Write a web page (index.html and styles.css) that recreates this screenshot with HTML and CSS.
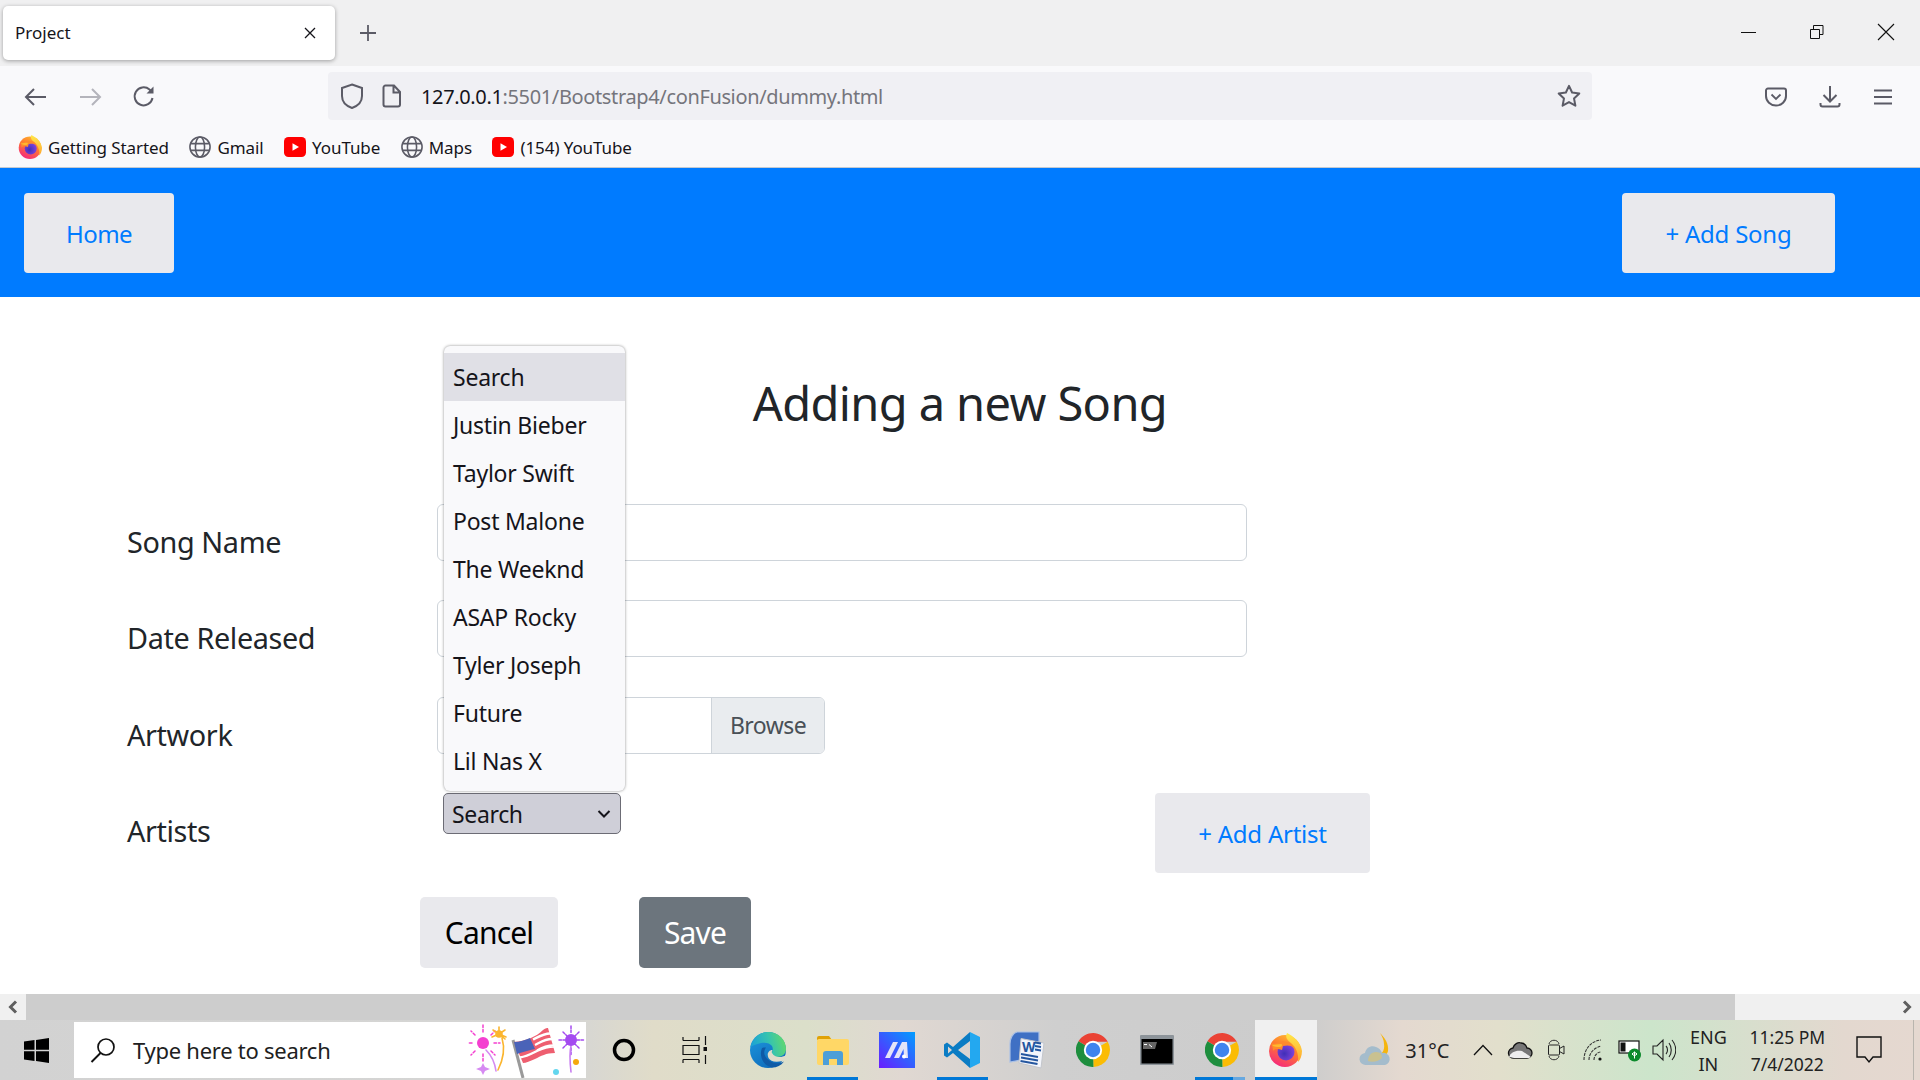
FILE: index.html
```html
<!DOCTYPE html>
<html lang="en">
<head>
<meta charset="utf-8">
<title>Project</title>
<link rel="stylesheet" href="styles.css">
</head>
<body>
<svg class="defs" width="0" height="0" aria-hidden="true">
  <defs>
    <linearGradient id="ffring" x1="0.8" y1="0" x2="0.3" y2="1"><stop offset="0" stop-color="#ffc02e"/><stop offset=".45" stop-color="#ff7a2f"/><stop offset="1" stop-color="#f5287e"/></linearGradient>
    <linearGradient id="ffflame" x1="0.5" y1="0" x2="0.5" y2="1"><stop offset="0" stop-color="#ffe84a"/><stop offset="1" stop-color="#ffa62e"/></linearGradient>
    <radialGradient id="ffcore" cx=".4" cy=".6" r=".7"><stop offset="0" stop-color="#3f2fb8"/><stop offset="1" stop-color="#8a47e0"/></radialGradient>
    <symbol id="globe" viewBox="0 0 24 24"><g fill="none" stroke="#5b5b66" stroke-width="1.700"><circle cx="12" cy="12" r="11"/><ellipse cx="12" cy="12" rx="5" ry="11"/><path d="M1.500 8.300h21M1.500 15.700h21"/></g></symbol>
    <symbol id="yt" viewBox="0 0 22 20"><rect width="22" height="20" rx="4.500" fill="#f00"/><path d="M8.500 6.200v7.600L15 10z" fill="#fff"/></symbol>
    <symbol id="ff" viewBox="0 0 34 34">
      <circle cx="17" cy="18" r="16" fill="url(#ffring)"/>
      <path d="M19 0c6 3 14 9 15 18 0 5-2 9-4 11 1-8-2-15-7-19-4-3-6-6-4-10z" fill="url(#ffflame)"/>
      <circle cx="18" cy="19" r="8.500" fill="url(#ffcore)"/>
      <path d="M3 10c2 1 4 1 6 0 3-2 7-2 11-1 3 1 5 3 6 6-3-3-7-3-11-2l-1 4c-3-1-7-2-9 1 0-3-1-6-2-8z" fill="#ff8a2b"/>
      <path d="M4 12c3 0 6-1 9-1 2 0 1 3-1 3-3 0-6 0-8-2z" fill="#ffb92e"/>
    </symbol>
    <symbol id="chrome" viewBox="4.500 4.500 39 39">
      <path d="M24 24 7.300 14A19.500 19.500 0 0 1 41 14.500H24z" fill="#ea4335"/>
      <path d="M24 24 41 14.500A19.500 19.500 0 0 1 24.500 43.500z" fill="#fbbc04"/>
      <path d="M24 24 24.500 43.500A19.500 19.500 0 0 1 7.300 14z" fill="#1e8e3e"/>
      <circle cx="24" cy="24" r="10.500" fill="#fff"/><circle cx="24" cy="24" r="8.300" fill="#3f84ee"/>
    </symbol>
  </defs>
</svg>

<header class="browser">
  <div class="tabstrip">
    <div class="tab">
      <span class="tab-title">Project</span>
      <svg class="tab-close" width="12" height="12" viewBox="0 0 12 12"><path d="M1 1l10 10M11 1 1 11" stroke="#15141a" stroke-width="1.300" fill="none"/></svg>
    </div>
    <svg class="new-tab" width="18" height="18" viewBox="0 0 18 18"><path d="M9 1v16M1 9h16" stroke="#5b5b66" stroke-width="1.800" fill="none"/></svg>
    <div class="window-controls">
      <svg width="16" height="16" viewBox="0 0 16 16"><path d="M0 8.500h15" stroke="#111" fill="none"/></svg>
      <svg width="16" height="16" viewBox="0 0 16 16"><path d="M1.500 5.500h9v9h-9zM4.500 5.500v-4h9.500v9h-3.500" stroke="#111" fill="none"/></svg>
      <svg width="18" height="18" viewBox="0 0 18 18"><path d="M1 1l16 16M17 1 1 17" stroke="#111" stroke-width="1.100" fill="none"/></svg>
    </div>
  </div>

  <div class="toolbar">
    <div class="nav-icons">
      <svg width="24" height="20" viewBox="0 0 24 20"><path d="M22 10H3M10 2l-8 8 8 8" stroke="#5b5b66" stroke-width="2" fill="none"/></svg>
      <svg width="24" height="20" viewBox="0 0 24 20"><path d="M2 10h19M14 2l8 8-8 8" stroke="#b4b4bb" stroke-width="2" fill="none"/></svg>
      <svg width="24" height="24" viewBox="0 0 24 24"><path d="M20.500 13a9 9 0 1 1-3-8.500l3 2.700" stroke="#5b5b66" stroke-width="2" fill="none"/><path d="M21.500 1.500v7h-7z" fill="#5b5b66"/></svg>
    </div>
    <div class="urlbar">
      <svg class="shield" width="24" height="26" viewBox="0 0 24 26"><path d="M12 1.500 22 5v8c0 6-4.500 10-10 12C6.500 23 2 19 2 13V5z" stroke="#5b5b66" stroke-width="2" fill="none"/></svg>
      <svg class="page" width="20" height="24" viewBox="0 0 20 24"><path d="M3.500 1.500h8.500l6 6.500v12.500a2 2 0 0 1-2 2H3.500a2 2 0 0 1-2-2v-17a2 2 0 0 1 2-2zM11.500 1.500v7h6.500" stroke="#5b5b66" stroke-width="2" fill="none"/></svg>
      <span class="url"><span class="url-host">127.0.0.1</span>:5501/Bootstrap4/conFusion/dummy.html</span>
      <svg class="star" width="24" height="24" viewBox="0 0 24 24"><path d="M12 1.800l3.100 6.700 7.200.9-5.300 5 1.400 7.300-6.400-3.600-6.400 3.600L7 14.400l-5.300-5 7.200-.9z" stroke="#5b5b66" stroke-width="2" stroke-linejoin="round" fill="none"/></svg>
    </div>
    <div class="tool-icons">
      <svg width="22" height="20" viewBox="0 0 22 20"><path d="M3 1.500h16a2 2 0 0 1 2 2V9a10 9.500 0 0 1-20 0V3.500a2 2 0 0 1 2-2z" stroke="#5b5b66" stroke-width="2" fill="none"/><path d="M6.500 7.500 11 12l4.500-4.500" stroke="#5b5b66" stroke-width="1.800" fill="none"/></svg>
      <svg width="22" height="24" viewBox="0 0 22 24"><path d="M11 1v15M4.500 10l6.500 6.500 6.500-6.500M1.500 18v1.500a2 2 0 0 0 2 2h15a2 2 0 0 0 2-2V18" stroke="#5b5b66" stroke-width="2" fill="none"/></svg>
      <svg width="20" height="18" viewBox="0 0 20 18"><path d="M1 2.500h18M1 9h18M1 15.500h18" stroke="#5b5b66" stroke-width="2.200" fill="none"/></svg>
    </div>
  </div>

  <div class="bookmarks">
    <a class="bookmark"><svg width="24" height="24"><use href="#ff"/></svg>Getting Started</a>
    <a class="bookmark"><svg width="22" height="22"><use href="#globe"/></svg>Gmail</a>
    <a class="bookmark"><svg width="22" height="20"><use href="#yt"/></svg>YouTube</a>
    <a class="bookmark"><svg width="22" height="22"><use href="#globe"/></svg>Maps</a>
    <a class="bookmark"><svg width="22" height="20"><use href="#yt"/></svg>(154) YouTube</a>
  </div>
</header>

<main class="page-area">
  <nav class="navbar">
    <button class="btn btn-nav btn-home" type="button">Home</button>
    <button class="btn btn-nav btn-add-song" type="button">+ Add Song</button>
  </nav>

  <section class="content">
    <h2 class="title">Adding a new Song</h2>
    <form class="form">
      <div class="row">
        <label class="row-label">Song Name</label>
        <input class="field field-wide" type="text">
      </div>
      <div class="row">
        <label class="row-label">Date Released</label>
        <input class="field field-wide" type="text">
      </div>
      <div class="row">
        <label class="row-label">Artwork</label>
        <div class="file">
          <span class="file-name"></span>
          <span class="file-browse">Browse</span>
        </div>
      </div>
      <div class="row row-artists">
        <label class="row-label">Artists</label>
        <div class="select-wrap">
          <ul class="dropdown">
            <li class="option option-active">Search</li>
            <li class="option">Justin Bieber</li>
            <li class="option">Taylor Swift</li>
            <li class="option">Post Malone</li>
            <li class="option">The Weeknd</li>
            <li class="option">ASAP Rocky</li>
            <li class="option">Tyler Joseph</li>
            <li class="option">Future</li>
            <li class="option">Lil Nas X</li>
          </ul>
          <div class="select"><span>Search</span>
            <svg width="14" height="10" viewBox="0 0 14 10"><path d="M1.500 2 7 7.500 12.500 2" stroke="#15141a" stroke-width="2" fill="none"/></svg>
          </div>
        </div>
        <button class="btn btn-nav btn-add-artist" type="button">+ Add Artist</button>
      </div>
      <div class="actions">
        <button class="btn btn-lg btn-cancel" type="button">Cancel</button>
        <button class="btn btn-lg btn-save" type="button">Save</button>
      </div>
    </form>
  </section>
</main>

<div class="hscroll">
  <span class="scroll-btn"><svg width="12" height="14" viewBox="0 0 12 14"><path d="M9 1.500 3.500 7 9 12.500" stroke="#5f5f5f" stroke-width="3" fill="none"/></svg></span>
  <span class="scroll-thumb"></span>
  <span class="scroll-track"></span>
  <span class="scroll-btn"><svg width="12" height="14" viewBox="0 0 12 14"><path d="M3 1.500 8.500 7 3 12.500" stroke="#5f5f5f" stroke-width="3" fill="none"/></svg></span>
</div>

<footer class="taskbar">
  <span class="start">
    <svg width="25" height="25" viewBox="0 0 25 25"><path d="M0 3.600 10.500 2.100v9.700H0zM12 1.900 25 0v11.800H12zM0 13.200h10.500v9.700L0 21.400zM12 13.200h13V25l-13-1.900z" fill="#000"/></svg>
  </span>
  <div class="searchbox">
    <svg width="26" height="26" viewBox="0 0 26 26"><circle cx="16" cy="10" r="8" stroke="#111" stroke-width="1.700" fill="none"/><path d="M10.500 16 1.500 25" stroke="#111" stroke-width="1.900" fill="none"/></svg>
    <span class="search-text">Type here to search</span>
    <svg class="doodle" width="118" height="56" viewBox="0 0 118 56">
      <g fill="none" stroke-linecap="round">
        <path d="M15 10V3M15 32v7M4 21h-6M26 21h6M7 13 3 9M23 13l4-4M7 29l-4 4M23 29l4 4" stroke="#f43fd0" stroke-width="1.500" stroke-dasharray="2.500 2"/>
        <path d="M18 28c6 6 9 14 10 21" stroke="#d58af0" stroke-width="1.600"/>
        <path d="M31 12V5M31 12l-6-4M31 12l6-4M31 12l-7 3M31 12l7 3M31 12l6 5M34 16c3 10 1 22-4 32" stroke="#fbb52e" stroke-width="1.600"/>
        <path d="M103 4v8M103 26v7M91 18h6M109 18h7M95 10l4 4M111 10l-4 4M95 26l4-4M111 26l-4-4" stroke="#a44af0" stroke-width="1.500" stroke-dasharray="2.500 1.500"/>
        <path d="M103 24c-2 8-1 17 0 26" stroke="#c77df0" stroke-width="1.600"/>
      </g>
      <circle cx="15" cy="21" r="6" fill="#f43fd0"/><circle cx="31" cy="12" r="3.800" fill="#fbb52e"/><circle cx="103" cy="18" r="6" fill="#a44af0"/>
      <path d="M15 41l2 4 5 2-5 2-2 4-2-4-5-2 5-2z" fill="#d68af2"/>
      <circle cx="108" cy="40" r="3" fill="#f5a90d"/><circle cx="88" cy="50" r="3" fill="#63d6ee"/>
      <path d="M45 18 55 56" stroke="#9a9a9a" stroke-width="3"/>
      <path d="M46 20c12-1 22-5 29-12 3-2 4-2 5-2l7 25c-9 0-14 3-20 6-5 2-9 4-12 4z" fill="#ee5f70"/>
      <path d="M65 17.500c6-3 11-6 17-6M67 23c6-3 10-6 17-6M69 28.500c5-3 9-5 17-5M52 35.500c7-1 12-4 18-7 4-2 9-4 16-4" stroke="#fff" stroke-width="2.300" fill="none"/>
      <path d="M46 20c6 0 11-2 16-4l5 11c-6 1-12 3-18 5z" fill="#4a63b8"/>
    </svg>
  </div>
  <span class="cortana"><svg width="26" height="26" viewBox="0 0 26 26"><circle cx="13" cy="13" r="9.500" stroke="#000" stroke-width="3.500" fill="none"/></svg></span>
  <span class="taskview"><svg width="26" height="30" viewBox="0 0 26 30"><path d="M1 5.500h16M1 2v3.500M17 2v3.500M1 10.500h16v9H1zM1 24.500h16M1 24.500V28M17 24.500V28M23.500 1v9M23.500 20v9" stroke="#111" stroke-width="1.200" fill="none"/><rect x="21.500" y="12" width="3.500" height="4" fill="#111"/></svg></span>
  <div class="apps">
    <span class="app">
      <svg width="36" height="36" viewBox="0 0 36 36">
        <defs>
          <linearGradient id="edgeblue" x1="0" y1="0" x2="0.6" y2="1"><stop offset="0" stop-color="#1f9be0"/><stop offset="1" stop-color="#0e6cbc"/></linearGradient>
          <linearGradient id="edgegreen" x1="0" y1="0.6" x2="1" y2="0.4"><stop offset="0" stop-color="#1aa0d8"/><stop offset=".55" stop-color="#35c3b0"/><stop offset="1" stop-color="#62d96c"/></linearGradient>
        </defs>
        <circle cx="18" cy="18" r="18" fill="url(#edgeblue)"/>
        <path d="M.500 15C3 5 10 0 18 0c11 0 18 8 18 17 0 5-4 8-9 8-4 0-6-2-5-5 1-2 1-4 0-6-2-3-7-4-11-3C6 12 2 14 .500 15z" fill="url(#edgegreen)"/>
        <path d="M36.500 23c-5 3-12 3-14.500-2-.5-1 0-2 .5-3-4 0-6 4-4 8 2 3 6 5 14 3 2-1 3-3 4-6z" fill="#dfdccb"/>
        <path d="M12 16c-3 7 0 17 10 19.500 5 0 9-2 12-6-6 3-12 2-16-2-4-3-5-8-2-12-2 0-3 0-4 .5z" fill="#0f5aa6"/>
      </svg>
    </span>
    <span class="app app-open">
      <svg width="34" height="32" viewBox="0 0 34 32"><path d="M1 4a2 2 0 0 1 2-2h10l3 4H1z" fill="#e0a206"/><rect x="1" y="5" width="32" height="26" rx="2" fill="#ffd766"/><path d="M7 31V20a3 3 0 0 1 3-3h14a3 3 0 0 1 3 3v11h-6v-6h-8v6z" fill="#4d9fd8"/></svg>
    </span>
    <span class="app">
      <svg width="36" height="36" viewBox="0 0 36 36"><defs><linearGradient id="ma" x1="0" y1="1" x2="1" y2="0"><stop offset="0" stop-color="#6a1cff"/><stop offset="1" stop-color="#009dff"/></linearGradient></defs><rect width="36" height="36" fill="url(#ma)"/><path d="M6 26 14 10h5l-8 16zM15 26l8-16h5l1 16h-4l-.5-9-4.500 9z" fill="#e4e4f8"/><circle cx="25" cy="24.500" r="2" fill="#fff"/></svg>
    </span>
    <span class="app app-open">
      <svg width="36" height="36" viewBox="0 0 36 36"><path d="M26 0 9 15 3 10.500 0 12.500v11L3 25.500 9 21l17 15v-9L14 18 26 9zM4 14.500 8 18l-4 3.500z" fill="#0a7cc4" fill-rule="evenodd"/><path d="M26 0l10 5v26l-10 5z" fill="#23a8f0"/></svg>
    </span>
    <span class="app">
      <svg width="37" height="38" viewBox="0 0 37 38">
        <path d="M9 1h22v25L2 31V13C2 7 5 2 9 1z" fill="#3f70c4" stroke="#a9c0e6" stroke-width="1.200"/>
        <path d="M13 7.500 36 12l-3 25-22-5z" fill="#f3f5fb" stroke="#c3c6cc"/>
        <text class="word-w" x="14" y="21">W</text>
        <path d="M27 11.500l6 1M27 15l6 1M27 18.500l6 1M13 23l17 3M13 26.500l17 3M12.500 30l17 3" stroke="#24569f" stroke-width="2"/>
      </svg>
    </span>
    <span class="app app-nudge"><svg width="34" height="34"><use href="#chrome"/></svg></span>
    <span class="app app-nudge">
      <svg width="34" height="30" viewBox="0 0 34 30"><rect width="34" height="30" rx="1" fill="#8d949a"/><rect x="1.500" y="4" width="31" height="24.500" fill="#000"/><path d="M3 7h14l-2 7H3z" fill="#666"/><path d="M4 9.500h3M9 9.500l3 2.500" stroke="#fff" stroke-width="1"/></svg>
    </span>
    <span class="app app-stack app-nudge"><svg width="34" height="34"><use href="#chrome"/></svg></span>
    <span class="app app-active"><svg width="34" height="34"><use href="#ff"/></svg></span>
  </div>
  <div class="tray">
    <svg class="t-weather" width="34" height="36" viewBox="0 0 34 36"><path d="M22 1c5 5 9 11 8 18-1 5-7 8-12 5 6-1 9-6 8-12 0-4-2-8-4-11z" fill="#f5b50e"/><path d="M8 33a6 6 0 0 1-1-12c1-5 6-8 11-6 3 1 5 3 6 6a6 6 0 0 1 3 12z" fill="#a4bccc"/><path d="M10 29c0-5 3-9 8-9s6 3 6 6c-3 3-9 5-14 3z" fill="#c9c190"/></svg>
    <span class="temp">31°C</span>
    <svg class="t-icon" width="20" height="12" viewBox="0 0 20 12"><path d="M1 11 10 1.500 19 11" stroke="#111" stroke-width="1.300" fill="none"/></svg>
    <svg class="t-icon" width="26" height="18" viewBox="0 0 26 18"><path d="M7 17a5 5 0 0 1-1-10c1-4 5-6 8-5 3 0 5 2 6 5a5 5 0 0 1 0 10z" fill="#777" stroke="#111" stroke-width="1.300"/><path d="M2 16c2-5 7-7 13-6l9 6-2 1H7z" fill="#eee"/></svg>
    <svg class="t-icon" width="18" height="28" viewBox="0 0 18 28"><path d="M2 8c1-5 9-5 10 0M2 20c1 5 9 5 10 0" stroke="#333" fill="none"/><rect x="1.500" y="9" width="11" height="10" rx="1" stroke="#222" fill="none"/><path d="M12.500 12.500 17 10v8l-4.500-2.500z" stroke="#222" fill="none"/></svg>
    <svg class="t-icon t-wifi" width="20" height="22" viewBox="0 0 20 22"><path d="M1 21C1 10 8 2 18 1M6 21c0-7 5-12 12-14M11 21c0-4 3-8 7-8" stroke="#333" stroke-width="1.100" stroke-dasharray="3 1" fill="none"/><circle cx="17" cy="20" r="1.600" fill="#111"/></svg>
    <svg class="t-icon t-battery" width="24" height="24" viewBox="0 0 24 24"><rect x="1" y="3" width="20" height="12" fill="#fff" stroke="#111" stroke-width="1.200"/><rect x="2.500" y="4.500" width="5" height="9" fill="#111"/><circle cx="16.500" cy="17" r="6.500" fill="#0c8a2c"/><path d="M16.500 13.500v7M14 16a3 3 0 0 0 5 0 3 3 0 0 0-5 0" stroke="#fff" fill="none"/></svg>
    <svg class="t-icon" width="24" height="24" viewBox="0 0 24 24"><path d="M1 8h4l6-6v20l-6-6H1zM14 8c2 2 2 6 0 8M17 5c3 4 3 10 0 14M20 2c5 6 5 14 0 20" stroke="#222" stroke-width="1.100" fill="none"/></svg>
    <span class="lang">ENG<br>IN</span>
    <span class="clock">11:25 PM<br>7/4/2022</span>
    <svg class="t-notify" width="26" height="28" viewBox="0 0 26 28"><path d="M1 1h24v20h-8l-4 5-4-5H1z" stroke="#111" stroke-width="1.400" fill="none"/></svg>
  </div>
</footer>
</body>
</html>
```

FILE: styles.css
```css
* { box-sizing: border-box; }
html, body { margin: 0; height: 100%; }
body {
  width: 1920px;
  height: 1080px;
  overflow: hidden;
  display: flex;
  flex-direction: column;
  font-family: "Noto Sans", "Open Sans", sans-serif;
  background: #fff;
  color: #212529;
}
.defs { position: absolute; }
svg { display: block; flex: none; }

/* browser chrome */
.browser { flex: none; }
.tabstrip {
  height: 66px;
  background: #f0f0f1;
  display: flex;
  align-items: center;
  padding-left: 3px;
}
.tab {
  width: 332px;
  height: 54px;
  margin-top: -1px;
  background: #fff;
  border-radius: 5px;
  box-shadow: 0 1px 4px rgba(0,0,0,.35);
  display: flex;
  align-items: center;
  justify-content: space-between;
  padding: 0 19px 0 12px;
  font-size: 17px;
  color: #15141a;
}
.new-tab { margin-left: 24px; }
.window-controls {
  margin-left: auto;
  display: flex;
  align-items: center;
  gap: 52px;
  padding-right: 25px;
  margin-top: -2px;
}
.toolbar {
  height: 60px;
  background: #f9f9fb;
  display: flex;
  align-items: center;
  padding: 0 16px 0 24px;
}
.nav-icons { display: flex; align-items: center; gap: 30px; width: 304px; margin-top: 2px; }
.urlbar {
  width: 1264px;
  height: 48px;
  background: #f0f0f4;
  border-radius: 4px;
  display: flex;
  align-items: center;
  padding: 0 11px 0 12px;
}
.page { margin-left: 18px; }
.url { margin-left: 19px; padding-top: 1px; font-size: 20px; letter-spacing: -.018em; color: #75757c; white-space: nowrap; }
.url-host { color: #15141a; }
.star { margin-left: auto; }
.tool-icons { display: flex; align-items: center; gap: 32px; margin-left: 173px; margin-top: 1px; }
.bookmarks {
  height: 42px;
  background: #f9f9fb;
  border-bottom: 1px solid #c4cad1;
  display: flex;
  align-items: center;
  padding: 1px 0 0 18px;
  gap: 20.500px;
  font-size: 17px;
  letter-spacing: -.005em;
  color: #15141a;
}
.bookmark { display: flex; align-items: center; gap: 6px; }

/* page */
.page-area { flex: 1; min-height: 0; }
.navbar {
  height: 129px;
  background: #007bff;
  display: flex;
  align-items: center;
  justify-content: space-between;
  padding: 0 85px 0 24px;
}
.btn {
  border: 0;
  border-radius: 4px;
  background: #e9e9ed;
  font-family: inherit;
  display: block;
}
.btn-nav { height: 80px; padding-top: 2px; font-size: 24px; letter-spacing: -.01em; color: #007bff; }
.btn-home { width: 150px; letter-spacing: -.025em; }
.btn-add-song { width: 213px; }
.content { padding-top: 70px; }
.title {
  margin: 0;
  height: 86px;
  font-size: 47px;
  font-weight: 400;
  letter-spacing: -.013em;
  line-height: 72px;
  text-align: center;
  color: #212529;
}
.form { padding: 51px 0 0 127px; }
.row { display: flex; height: 96.400px; align-items: flex-start; }
.row-label { width: 310px; font-size: 28.800px; letter-spacing: -.013em; line-height: 40px; padding-top: 18px; color: #212529; }
.field {
  height: 57px;
  border: 1px solid #ced4da;
  border-radius: 6px;
  background: #fff;
}
.field-wide { width: 810px; }
.file {
  width: 388px;
  height: 57px;
  border: 1px solid #ced4da;
  border-radius: 6px;
  display: flex;
  overflow: hidden;
}
.file-name { flex: 1; }
.file-browse {
  width: 113px;
  background: #e9ecef;
  border-left: 1px solid #ced4da;
  color: #495057;
  font-size: 23px;
  letter-spacing: -.025em;
  line-height: 55px;
  text-align: center;
}
.row-artists { height: 103.500px; }
.select-wrap { position: relative; margin-left: 6px; width: 178px; }
.select {
  height: 41px;
  background: #cfcfd8;
  border: 1px solid #6c6c75;
  border-radius: 5px;
  display: flex;
  align-items: center;
  justify-content: space-between;
  padding: 0 9px 0 8px;
  font-size: 23px;
  letter-spacing: -.015em;
  color: #15141a;
}
.dropdown {
  position: absolute;
  left: 1px;
  bottom: 43px;
  width: 181px;
  margin: 0;
  padding: 7px 0 6px;
  list-style: none;
  background: #f9f9fb;
  border-radius: 6px;
  box-shadow: 0 0 3px rgba(0,0,0,.45);
  font-size: 23px;
  letter-spacing: -.01em;
  color: #15141a;
}
.option { height: 48px; line-height: 48px; padding-left: 9px; }
.option-active { background: #e0e0e6; }
.btn-add-artist { width: 215px; margin-left: 534px; }
.actions { display: flex; gap: 81px; margin-left: 293px; }
.btn-lg { height: 71px; font-size: 30px; letter-spacing: -.027em; border-radius: 5px; }
.btn-cancel { width: 138px; color: #000; }
.btn-save { width: 112px; background: #6c757d; color: #fff; }

/* horizontal scrollbar */
.hscroll { flex: none; height: 26px; display: flex; background: #f0f0f0; }
.scroll-btn { width: 26px; display: flex; align-items: center; justify-content: center; }
.scroll-thumb { width: 1709px; background: #cdcdcd; }
.scroll-track { flex: 1; }

/* windows taskbar */
.taskbar {
  flex: none;
  height: 60px;
  display: flex;
  align-items: center;
  background: linear-gradient(90deg, #d2d2d2 0, #d6d6d4 30%, #e0dcc9 34%, #dbdfca 42%, #e0d8d2 47%, #cfcfcf 55%, #cccccc 68%, #e4d9d0 73%, #e2dfcc 78%, #cce5cb 86%, #e3d8cf 96%, #e5d8d0 100%);
}
.start { width: 74px; display: flex; justify-content: center; padding-right: 2px; }
.searchbox {
  width: 512px;
  height: 56px;
  background: #fff;
  display: flex;
  align-items: center;
  padding-left: 16px;
  position: relative;
  overflow: hidden;
}
.search-text { margin-left: 17px; font-size: 22px; letter-spacing: -.012em; color: #202020; }
.doodle { position: absolute; right: 0; top: 0; }
.cortana { width: 76px; display: flex; justify-content: center; }
.taskview { width: 66px; display: flex; justify-content: center; margin-right: 8px; }
.apps { display: flex; height: 60px; }
.app {
  width: 64.600px;
  height: 60px;
  display: flex;
  align-items: center;
  justify-content: center;
  padding-bottom: 0;
}
.app-nudge { padding-left: 3px; }
.app-open { background: linear-gradient(#0078d7, #0078d7) center bottom / 51px 3px no-repeat; }
.app-stack {
  background:
    linear-gradient(90deg, #0078d7 38px, #66a8e0 38px) center bottom / 50px 3px no-repeat;
}
.app-active {
  background:
    linear-gradient(#0078d7, #0078d7) right bottom / 62px 3px no-repeat,
    linear-gradient(#f0f0f0, #f0f0f0) right top / 62px 100% no-repeat;
}
.word-w { font: 700 14px "Noto Sans", sans-serif; fill: #24569f; }
.tray { flex: 1; display: flex; align-items: center; height: 60px; position: relative; font-size: 20px; color: #222; padding-left: 41px; }
.tray::after { content: ""; position: absolute; right: 6px; top: 0; bottom: 0; border-left: 1px solid #b9b5ae; }
.temp { margin-left: 13px; width: 68px; }
.t-icon { margin-right: 14px; }
.t-wifi { margin-left: 4px; margin-right: 15px; }
.t-battery { margin-right: 10px; }
.lang { width: 50px; padding-top: 2px; text-align: center; font-size: 18px; line-height: 27px; margin-left: -7px; }
.clock { width: 100px; padding-top: 2px; margin-left: 4px; text-align: center; font-size: 17.500px; line-height: 27px; }
.t-notify { margin-left: 19px; }
```
